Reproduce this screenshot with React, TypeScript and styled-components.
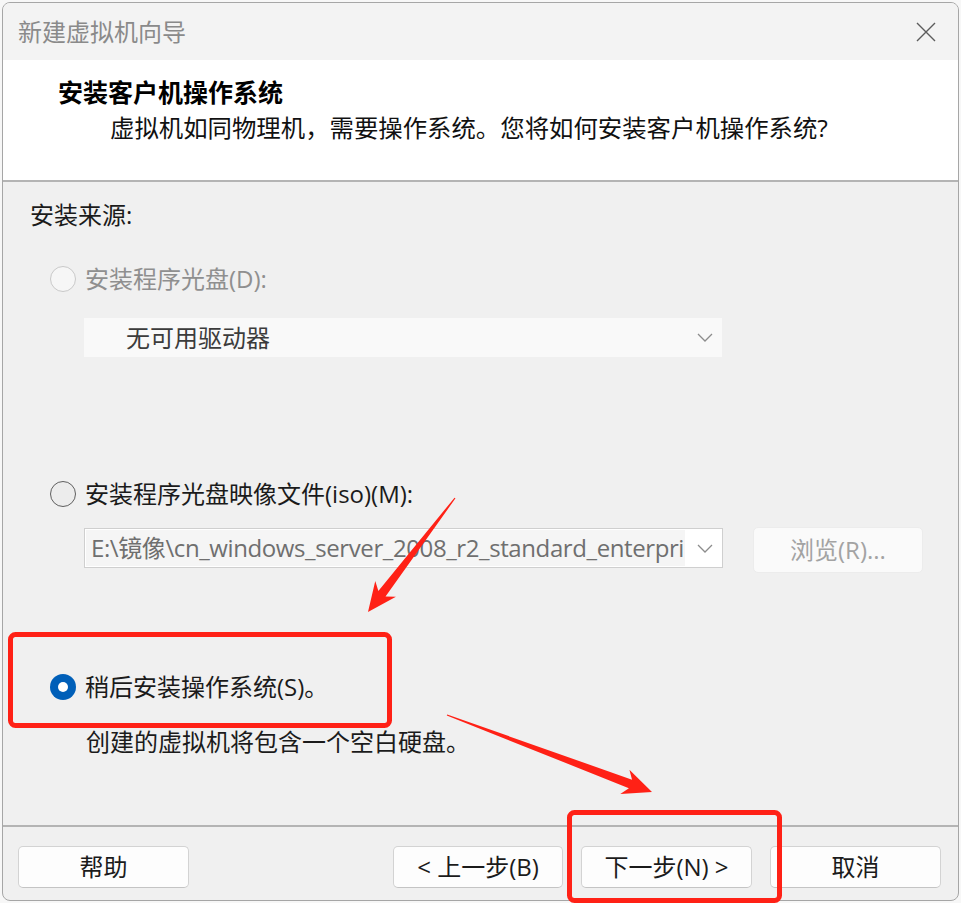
import React from 'react';
import styled, { createGlobalStyle, css } from 'styled-components';

const GlobalStyle = createGlobalStyle`
  html, body {
    margin: 0;
    padding: 0;
    background: #f7f7f7;
  }
  body {
    font-family: "Open Sans", "Noto Sans CJK SC", sans-serif;
    color: #1b1b1b;
  }
`;

const Page = styled.div`
  position: relative;
  width: 961px;
  height: 903px;
  padding: 2px 0 0 2px;
  box-sizing: border-box;
  overflow: hidden;
`;

const Window = styled.div`
  width: 957px;
  height: 899px;
  box-sizing: border-box;
  border: 1px solid #a6a6a6;
  border-radius: 8px;
  overflow: hidden;
  background: #f0f0f0;
  display: flex;
  flex-direction: column;
`;

const TitleBar = styled.div`
  flex: none;
  height: 57px;
  display: flex;
  align-items: center;
  justify-content: space-between;
  padding: 0 22px 0 15px;
  background: #f3f3f3;
`;

const WindowTitle = styled.span`
  font-size: 24px;
  line-height: 32px;
  color: #8a8a8a;
`;

const CloseButton = styled.span`
  display: flex;
  width: 20px;
  height: 20px;
`;

const Header = styled.div`
  flex: none;
  height: 122px;
  box-sizing: border-box;
  padding: 16px 0 0 55px;
  background: #ffffff;
  border-bottom: 2px solid #b4b4b4;
`;

const HeaderTitle = styled.div`
  font-size: 25px;
  line-height: 32px;
  font-weight: 700;
  color: #000;
`;

const HeaderText = styled.div`
  margin: 4px 0 0 52px;
  font-size: 24.4px;
  line-height: 32px;
  color: #111;
`;

const Body = styled.div`
  flex: 1;
  padding: 17px 0 0 27px;
  font-size: 24px;
  line-height: 32px;
`;

const SectionLabel = styled.div`
  color: #1b1b1b;
`;

const OptionRow = styled.label<{ $top: number }>`
  display: flex;
  align-items: center;
  gap: 9px;
  height: 32px;
  margin: ${(p) => p.$top}px 0 0 20px;
`;

type RadioState = 'disabled' | 'off' | 'on';

const Radio = styled.span<{ $state: RadioState }>`
  flex: none;
  width: 26px;
  height: 26px;
  box-sizing: border-box;
  border-radius: 50%;
  display: flex;
  align-items: center;
  justify-content: center;
  ${(p) =>
    p.$state === 'disabled' &&
    css`
      border: 1.5px solid #c9c9c9;
      background: #f6f6f6;
    `}
  ${(p) =>
    p.$state === 'off' &&
    css`
      border: 1.5px solid #5f5f5f;
      background: #ececec;
    `}
  ${(p) =>
    p.$state === 'on' &&
    css`
      background: #005fb8;
      &::after {
        content: '';
        width: 10px;
        height: 10px;
        border-radius: 50%;
        background: #ffffff;
      }
    `}
`;

const OptionText = styled.span<{ $disabled?: boolean }>`
  color: ${(p) => (p.$disabled ? '#8f8f8f' : '#1b1b1b')};
`;

const Dropdown = styled.div`
  width: 638px;
  height: 39px;
  margin: 23px 0 0 54px;
  box-sizing: border-box;
  padding: 0 9px 0 42px;
  display: flex;
  align-items: center;
  justify-content: space-between;
  background: #f9f9f9;
  color: #3c3c3c;
`;

const FileRow = styled.div`
  display: flex;
  align-items: flex-start;
  gap: 30px;
  margin: 17px 0 0 54px;
`;

const FileInput = styled.div`
  width: 639px;
  height: 40px;
  margin-top: 1px;
  box-sizing: border-box;
  border: 1px solid #cfcfcf;
  background: #ffffff;
  display: flex;
  align-items: center;
  padding: 0 9px 0 1px;
  gap: 12px;
`;

const FileText = styled.div`
  width: 599px;
  height: 36px;
  line-height: 36px;
  box-sizing: border-box;
  padding-left: 5px;
  background: #f5f5f5;
  color: #6f6f6f;
  letter-spacing: -0.4px;
  white-space: nowrap;
  overflow: hidden;
`;

const BrowseButton = styled.button`
  width: 170px;
  height: 46px;
  border: 1px solid #ececec;
  border-radius: 5px;
  background: #fafafa;
  color: #a3a3a3;
  font: inherit;
  padding: 0;
`;

const Description = styled.div`
  margin: 23px 0 0 56px;
  color: #1b1b1b;
`;

const Footer = styled.div`
  flex: none;
  height: 75px;
  box-sizing: border-box;
  border-top: 2px solid #b4b4b4;
  padding: 19px 17px 0 15px;
  display: flex;
  align-items: flex-start;
`;

const Spacer = styled.div`
  flex: 1;
`;

const ButtonGroup = styled.div`
  display: flex;
  gap: 18px;
`;

const DialogButton = styled.button<{ $width: number }>`
  width: ${(p) => p.$width}px;
  height: 42px;
  border: 1px solid #d3d3d3;
  border-bottom-color: #c4c4c4;
  border-radius: 5px;
  background: #fdfdfd;
  color: #1b1b1b;
  font-family: "Open Sans", "Noto Sans CJK SC", sans-serif;
  font-size: 24px;
  line-height: 32px;
  padding: 0;
`;

const Overlay = styled.svg`
  position: absolute;
  top: 0;
  left: 0;
  pointer-events: none;
`;

const Chevron = () => (
  <svg width="16" height="9" viewBox="0 0 16 9">
    <path d="M1 1 L8 8 L15 1" fill="none" stroke="#8c8c8c" strokeWidth="1.3" />
  </svg>
);

// swept arrow like a screenshot annotation tool draws
const arrowPoints = (tx: number, ty: number, hx: number, hy: number) => {
  const dx = hx - tx;
  const dy = hy - ty;
  const len = Math.hypot(dx, dy);
  const ux = dx / len;
  const uy = dy / len;
  const nx = -uy;
  const ny = ux;
  const at = (back: number, side: number) =>
    `${hx - ux * back + nx * side},${hy - uy * back + ny * side}`;
  const tail = (side: number) => `${tx + nx * side},${ty + ny * side}`;
  return [
    tail(0.6),
    at(23, 4.5),
    at(29, 13),
    `${hx},${hy}`,
    at(29, -13),
    at(23, -4.5),
    tail(-0.6),
  ].join(' ');
};

const RED = '#ff2116';

export default function App() {
  return (
    <Page>
      <GlobalStyle />
      <Window>
        <TitleBar>
          <WindowTitle>新建虚拟机向导</WindowTitle>
          <CloseButton>
            <svg width="20" height="20" viewBox="0 0 20 20">
              <path d="M1 1 L19 19 M19 1 L1 19" stroke="#5c5c5c" strokeWidth="1.4" />
            </svg>
          </CloseButton>
        </TitleBar>

        <Header>
          <HeaderTitle>安装客户机操作系统</HeaderTitle>
          <HeaderText>虚拟机如同物理机，需要操作系统。您将如何安装客户机操作系统?</HeaderText>
        </Header>

        <Body>
          <SectionLabel>安装来源:</SectionLabel>

          <OptionRow $top={32}>
            <Radio $state="disabled" />
            <OptionText $disabled>安装程序光盘(D):</OptionText>
          </OptionRow>
          <Dropdown>
            <span>无可用驱动器</span>
            <Chevron />
          </Dropdown>

          <OptionRow $top={121}>
            <Radio $state="off" />
            <OptionText>安装程序光盘映像文件(iso)(M):</OptionText>
          </OptionRow>
          <FileRow>
            <FileInput>
              <FileText>E:\镜像\cn_windows_server_2008_r2_standard_enterpri</FileText>
              <Chevron />
            </FileInput>
            <BrowseButton>浏览(R)...</BrowseButton>
          </FileRow>

          <OptionRow $top={98}>
            <Radio $state="on" />
            <OptionText>稍后安装操作系统(S)。</OptionText>
          </OptionRow>
          <Description>创建的虚拟机将包含一个空白硬盘。</Description>
        </Body>

        <Footer>
          <DialogButton $width={171}>帮助</DialogButton>
          <Spacer />
          <ButtonGroup>
            <DialogButton $width={170}>&lt; 上一步(B)</DialogButton>
            <DialogButton $width={171}>下一步(N) &gt;</DialogButton>
            <DialogButton $width={171}>取消</DialogButton>
          </ButtonGroup>
        </Footer>
      </Window>

      <Overlay width="961" height="903" viewBox="0 0 961 903">
        <rect x="10.5" y="634.5" width="379" height="91" rx="5" fill="none" stroke={RED} strokeWidth="5" />
        <rect x="569.5" y="812.5" width="210" height="88" rx="5" fill="none" stroke={RED} strokeWidth="5" />
        <polygon points={arrowPoints(455, 498, 368, 612)} fill={RED} />
        <polygon points={arrowPoints(447, 715, 652, 792)} fill={RED} />
      </Overlay>
    </Page>
  );
}
